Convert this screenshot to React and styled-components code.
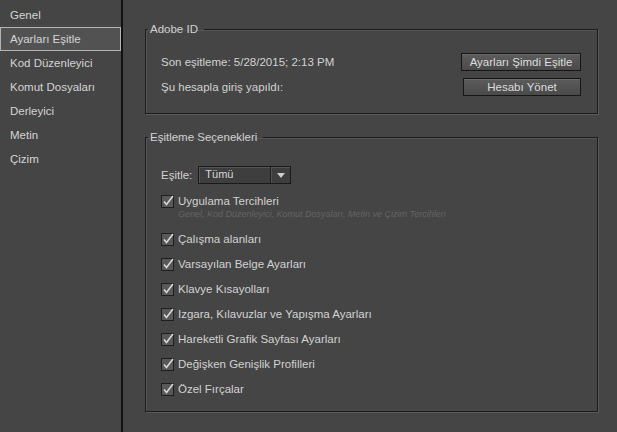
import React from "react";
import styled, { createGlobalStyle } from "styled-components";

const GlobalStyle = createGlobalStyle`
  html, body {
    margin: 0;
    padding: 0;
    background: #454545;
  }
  body {
    font-family: "Liberation Sans", Arial, sans-serif;
    font-size: 11.5px;
    color: #d2d2d2;
  }
`;

const Window = styled.div`
  display: flex;
  width: 617px;
  height: 432px;
  background: #454545;
  overflow: hidden;
`;

const Sidebar = styled.ul`
  list-style: none;
  margin: 0;
  padding: 3px 0 0;
  width: 121px;
  border-right: 2px solid #111;
  flex-shrink: 0;
`;

const NavItem = styled.li`
  height: ${(p) => (p.active ? "22px" : "24px")};
  line-height: ${(p) => (p.active ? "22px" : "24px")};
  margin: 0;
  border: ${(p) => (p.active ? "1px solid #b4b4b4" : "none")};
  padding-left: ${(p) => (p.active ? "9px" : "10px")};
  background: ${(p) => (p.active ? "#525252" : "transparent")};
  color: #d4d4d4;
`;

const Main = styled.div`
  flex: 1;
  padding: 23px 19px 0 22px;
  display: flex;
  flex-direction: column;
  gap: 17px;
`;

const Group = styled.fieldset`
  margin: 0;
  padding: ${(p) => p.pad};
  border: 1px solid #1c1c1c;
  box-shadow: 1px 1px 0 #5a5a5a, inset 1px 1px 0 #555;
  min-width: 0;
`;

const Legend = styled.legend`
  padding: 0 6px 0 2px;
  margin-left: -13px;
  color: #d0d0d0;
  font-size: 11.5px;
`;

const AccountGrid = styled.div`
  display: grid;
  grid-template-columns: 1fr auto;
  row-gap: 7px;
  align-items: center;
`;

const Label = styled.span`
  color: #d2d2d2;
`;

const Button = styled.button`
  justify-self: end;
  width: ${(p) => p.w}px;
  height: 18px;
  padding: 0;
  font-family: inherit;
  font-size: 11.5px;
  color: #dcdcdc;
  border: 1px solid #161616;
  background: linear-gradient(#5c5c5c, #4a4a4a);
  box-shadow: inset 0 1px 0 #6a6a6a;
`;

const SyncRow = styled.div`
  display: flex;
  align-items: center;
  gap: 6px;
  margin-bottom: 7px;
`;

const Select = styled.div`
  display: flex;
  width: 93px;
  height: 18px;
  box-sizing: border-box;
  border: 1px solid #1a1a1a;
  background: #3e3e3e;
  box-shadow: inset 1px 1px 0 #555;
`;

const SelectValue = styled.span`
  flex: 1;
  padding-left: 6px;
  line-height: 15px;
  font-size: 11px;
  color: #d6d6d6;
`;

const SelectArrow = styled.span`
  width: 19px;
  border-left: 1px solid #1e1e1e;
  box-shadow: inset 1px 0 0 #555;
  display: flex;
  align-items: center;
  justify-content: center;
`;

const Options = styled.div`
  display: flex;
  flex-direction: column;
`;

const Option = styled.label`
  display: flex;
  align-items: center;
  gap: 3px;
  height: 25px;
`;

const OptionBlock = styled.div`
  display: flex;
  flex-direction: column;
  height: 35px;
  padding-top: 3px;
  box-sizing: border-box;
`;

const OptionHead = styled.div`
  display: flex;
  align-items: center;
  gap: 3px;
`;

const Hint = styled.div`
  margin: 1px 0 0 17px;
  font-size: 9px;
  font-style: italic;
  color: #646464;
`;

const Check = () => (
  <svg width="14" height="14" viewBox="0 0 14 14">
    <rect x="0.5" y="1.5" width="12" height="12" fill="#585858" stroke="#1e1e1e" />
    <path d="M3 7.5 L5.5 10.5 L12 2" fill="none" stroke="#d8d8d8" strokeWidth="1.6" />
  </svg>
);

const navItems = [
  "Genel",
  "Ayarları Eşitle",
  "Kod Düzenleyici",
  "Komut Dosyaları",
  "Derleyici",
  "Metin",
  "Çizim",
];

const options = [
  "Çalışma alanları",
  "Varsayılan Belge Ayarları",
  "Klavye Kısayolları",
  "Izgara, Kılavuzlar ve Yapışma Ayarları",
  "Hareketli Grafik Sayfası Ayarları",
  "Değişken Genişlik Profilleri",
  "Özel Fırçalar",
];

export default function App() {
  return (
    <Window>
      <GlobalStyle />
      <Sidebar>
        {navItems.map((n) => (
          <NavItem key={n} active={n === "Ayarları Eşitle"}>
            {n}
          </NavItem>
        ))}
      </Sidebar>
      <Main>
        <Group pad="18px 16px 17px 15px">
          <Legend>Adobe ID</Legend>
          <AccountGrid>
            <Label>Son eşitleme: 5/28/2015; 2:13 PM</Label>
            <Button w={120}>Ayarları Şimdi Eşitle</Button>
            <Label>Şu hesapla giriş yapıldı:</Label>
            <Button w={118}>Hesabı Yönet</Button>
          </AccountGrid>
        </Group>
        <Group pad="23px 16px 10px 15px">
          <Legend>Eşitleme Seçenekleri</Legend>
          <SyncRow>
            <Label>Eşitle:</Label>
            <Select>
              <SelectValue>Tümü</SelectValue>
              <SelectArrow>
                <svg width="8" height="5" viewBox="0 0 8 5">
                  <path d="M0 0 H8 L4 5 Z" fill="#cfcfcf" />
                </svg>
              </SelectArrow>
            </Select>
          </SyncRow>
          <Options>
            <OptionBlock>
              <OptionHead>
                <Check />
                <Label>Uygulama Tercihleri</Label>
              </OptionHead>
              <Hint>Genel, Kod Düzenleyici, Komut Dosyaları, Metin ve Çizim Tercihleri</Hint>
            </OptionBlock>
            {options.map((o) => (
              <Option key={o}>
                <Check />
                <Label>{o}</Label>
              </Option>
            ))}
          </Options>
        </Group>
      </Main>
    </Window>
  );
}
